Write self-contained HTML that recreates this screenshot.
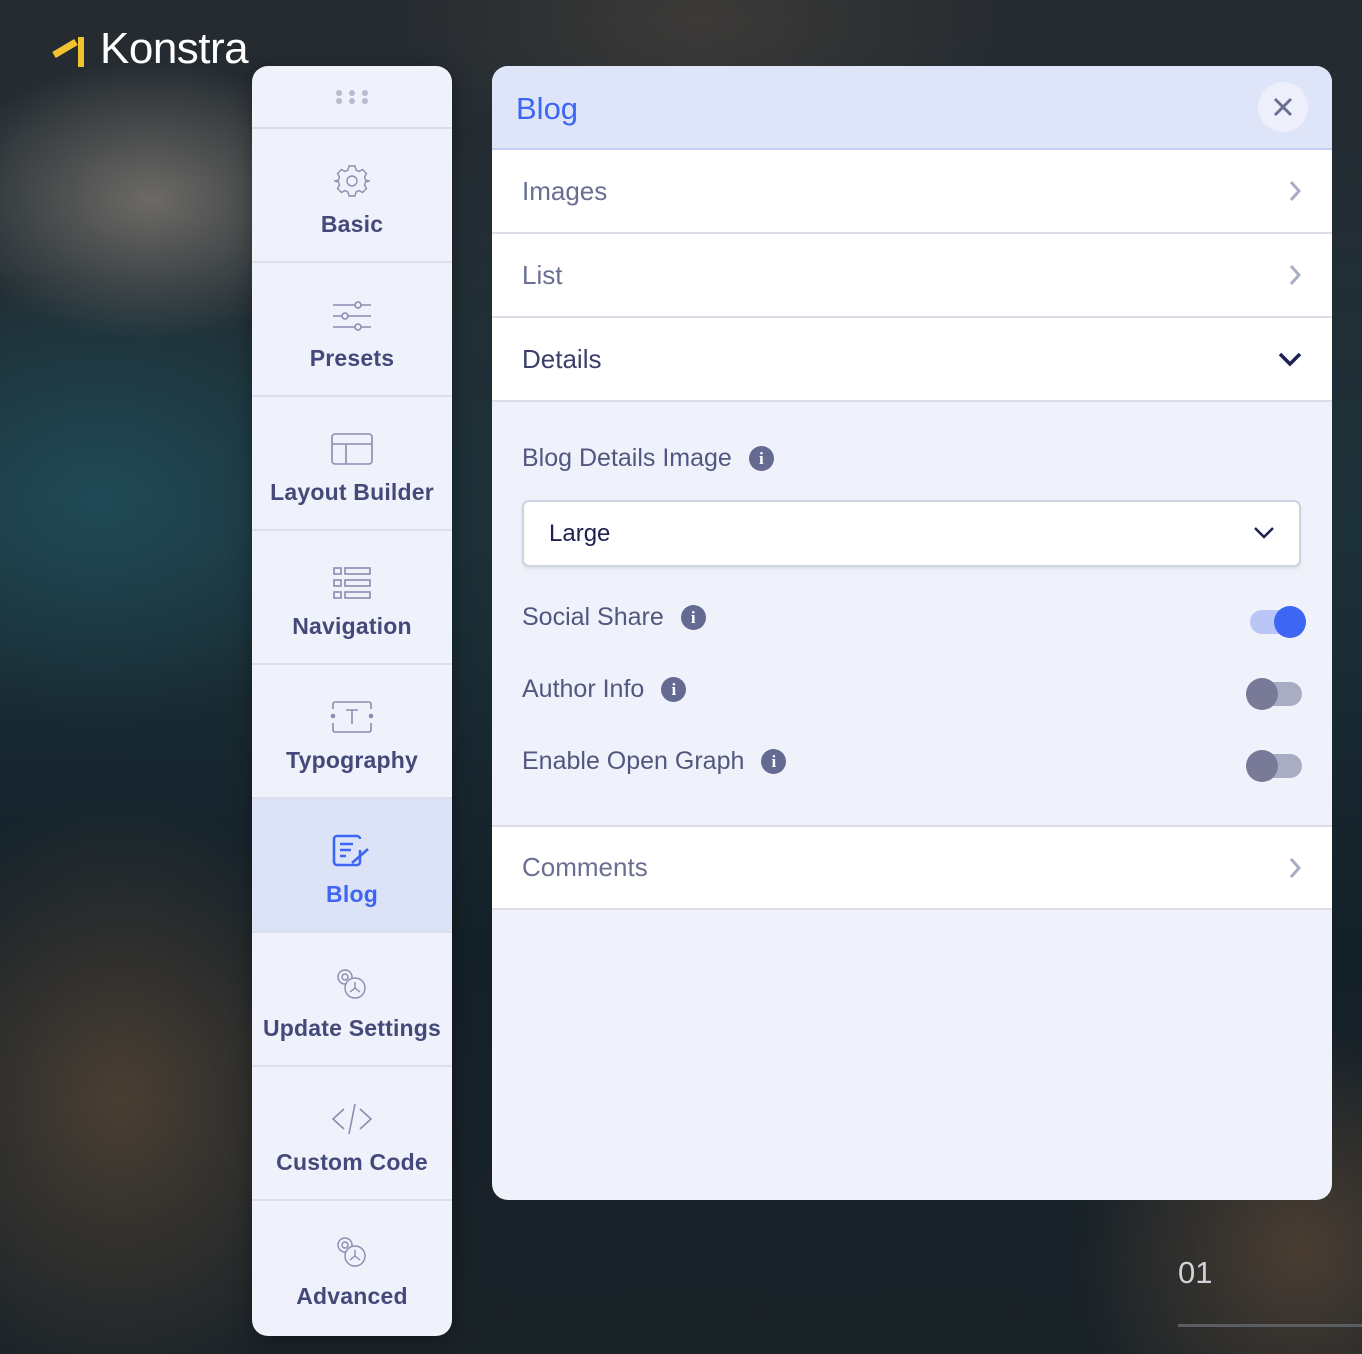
<!DOCTYPE html>
<html><head><meta charset="utf-8"><style>
*{box-sizing:border-box;margin:0;padding:0}
body{width:1362px;height:1354px;overflow:hidden;position:relative;font-family:"Liberation Sans",sans-serif;
background:
radial-gradient(ellipse 300px 200px at 150px 200px,#6d6a66 0%,transparent 70%),
radial-gradient(ellipse 400px 300px at 100px 500px,#1f4a56 0%,transparent 75%),
radial-gradient(ellipse 350px 400px at 120px 1100px,#4a3e33 0%,transparent 75%),
radial-gradient(ellipse 300px 300px at 1300px 1250px,#4a3d32 0%,transparent 75%),
radial-gradient(ellipse 400px 200px at 700px 20px,#3c3a38 0%,transparent 75%),
linear-gradient(180deg,#262b30 0%,#1c3038 40%,#142028 70%,#1a2328 100%);}
.logo{position:absolute;left:52px;top:24px;color:#fff;font-size:44px;letter-spacing:-0.5px;display:flex;align-items:center}
.side{position:absolute;left:252px;top:66px;width:200px;height:1270px;background:#eff2fa;border-radius:16px;overflow:hidden;box-shadow:0 4px 20px rgba(0,0,0,.3)}
.dots{height:63px;border-bottom:2px solid #d8dbe8;display:flex;justify-content:center;align-items:center}
.it{height:134px;border-bottom:2px solid #dcdfea;display:flex;flex-direction:column;align-items:center;justify-content:flex-start;padding-top:34px;color:#45497a;font-size:23px;font-weight:bold;letter-spacing:.2px}
.it svg{height:36px;margin-bottom:12px}
.it.act{background:#dde3f6;color:#3d66f5}
.panel{position:absolute;left:492px;top:66px;width:840px;height:1134px;background:#eff2fa;border-radius:16px;overflow:hidden}
.hd{height:84px;background:#dfe5f8;border-bottom:2px solid #c5d0f2;display:flex;align-items:center;padding:4px 24px 0;color:#3d66f5;font-size:31px;position:relative}
.x{position:absolute;right:24px;top:16px;width:50px;height:50px;border-radius:50%;background:#edf0fa;display:flex;align-items:center;justify-content:center}
.row{height:84px;background:#fff;border-bottom:2px solid #dcdde6;display:flex;align-items:center;padding:0 30px;font-size:26px;color:#6a6f92;justify-content:space-between}
.lab{position:absolute;left:30px;font-size:25px;color:#52577f;display:flex;align-items:center}
.i{display:inline-block;width:25px;height:25px;border-radius:50%;background:#646a92;color:#fff;font-size:17px;font-weight:bold;text-align:center;line-height:25px;margin-left:17px;font-family:"Liberation Serif",serif}
.tg{position:absolute;width:56px;height:24px;border-radius:12px}
.kn{position:absolute;width:32px;height:32px;border-radius:50%;top:-4px}
</style></head><body>
<div class="logo"><svg width="38" height="36" viewBox="0 0 38 36"><path d="M2 24 L24 11" stroke="#f2c230" stroke-width="7"/><rect x="26" y="6" width="6" height="30" fill="#f2c230"/></svg><span style="margin-left:10px">Konstra</span></div>

<div class="side">
<div class="dots"><svg width="34" height="14"><g fill="#b7bbd0"><circle cx="4" cy="3" r="3"/><circle cx="17" cy="3" r="3"/><circle cx="30" cy="3" r="3"/><circle cx="4" cy="11" r="3"/><circle cx="17" cy="11" r="3"/><circle cx="30" cy="11" r="3"/></g></svg></div>
<div class="it"><svg width="36" viewBox="0 0 36 36" fill="none" stroke="#8a8db0" stroke-width="1.4"><circle cx="18" cy="18" r="5"/><path d="M15 3h6l1 4 3 1.5 3.5-2 4 4-2 3.5L31.5 17l3.5 1v0l-3.5 1-1 3 2 3.5-4 4-3.5-2-3 1.5-1 4h-6l-1-4-3-1.5-3.5 2-4-4 2-3.5L4.5 19 1 18l3.5-1 1-3-2-3.5 4-4 3.5 2L14 7z"/></svg>Basic</div>
<div class="it"><svg width="40" viewBox="0 0 40 36" fill="none" stroke="#8a8db0" stroke-width="1.6"><path d="M1 8h38M1 19h38M1 30h38"/><circle cx="26" cy="8" r="3" fill="#eff2fa"/><circle cx="13" cy="19" r="3" fill="#eff2fa"/><circle cx="26" cy="30" r="3" fill="#eff2fa"/></svg>Presets</div>
<div class="it"><svg width="42" viewBox="0 0 42 36" fill="none" stroke="#8a8db0" stroke-width="1.6"><rect x="1" y="3" width="40" height="30" rx="3"/><path d="M1 13h40M15 13v20"/></svg>Layout Builder</div>
<div class="it"><svg width="38" viewBox="0 0 38 36" fill="none" stroke="#8a8db0" stroke-width="1.6"><rect x="1" y="3" width="7" height="6"/><rect x="12" y="3" width="25" height="6"/><rect x="1" y="15" width="7" height="6"/><rect x="12" y="15" width="25" height="6"/><rect x="1" y="27" width="7" height="6"/><rect x="12" y="27" width="25" height="6"/></svg>Navigation</div>
<div class="it"><svg width="44" viewBox="0 0 44 36" fill="none" stroke="#8a8db0" stroke-width="1.6"><path d="M3 10V5a2 2 0 012-2h34a2 2 0 012 2v5M3 24v7a2 2 0 002 2h34a2 2 0 002-2v-7"/><path d="M16 11h12M22 11v14"/><circle cx="3" cy="17" r="1.5" fill="#8a8db0"/><circle cx="41" cy="17" r="1.5" fill="#8a8db0"/></svg>Typography</div>
<div class="it act"><svg width="40" viewBox="0 0 40 36" fill="none" stroke="#3d66f5" stroke-width="2.6"><path d="M28 17v12a3 3 0 01-3 3H5a3 3 0 01-3-3V6a3 3 0 013-3h20a3 3 0 013 3"/><path d="M8 11h13M8 17h11M8 23h6"/><path d="M20 30l16-14" /></svg>Blog</div>
<div class="it"><svg width="36" viewBox="0 0 36 36" fill="none" stroke="#8a8db0" stroke-width="1.4"><circle cx="11" cy="10" r="7"/><circle cx="11" cy="10" r="3"/><circle cx="21" cy="21" r="10" fill="#eff2fa"/><path d="M21 21l0-6M21 21l5 4M21 21l-5 4"/></svg>Update Settings</div>
<div class="it"><svg width="42" viewBox="0 0 42 36" fill="none" stroke="#8a8db0" stroke-width="1.6"><path d="M13 8L2 18l11 10M29 8l11 10-11 10M24 3L18 33"/></svg>Custom Code</div>
<div class="it" style="border:none"><svg width="36" viewBox="0 0 36 36" fill="none" stroke="#8a8db0" stroke-width="1.4"><circle cx="11" cy="10" r="7"/><circle cx="11" cy="10" r="3"/><circle cx="21" cy="21" r="10" fill="#eff2fa"/><path d="M21 21l0-6M21 21l5 4M21 21l-5 4"/></svg>Advanced</div>
</div>

<div class="panel">
<div class="hd">Blog<div class="x"><svg width="20" height="20"><path d="M2 2L18 18M18 2L2 18" stroke="#6a6f92" stroke-width="3"/></svg></div></div>
<div class="row">Images<svg width="14" height="22"><path d="M3 2l8 9-8 9" stroke="#a9adc4" stroke-width="3" fill="none"/></svg></div>
<div class="row">List<svg width="14" height="22"><path d="M3 2l8 9-8 9" stroke="#a9adc4" stroke-width="3" fill="none"/></svg></div>
<div class="row" style="color:#3b3f6a">Details<svg width="24" height="16"><path d="M2 3l10 10 10-10" stroke="#1c2150" stroke-width="3.5" fill="none"/></svg></div>
<div style="height:423px;position:relative">
<div class="lab" style="top:42px">Blog Details Image<span class="i">i</span></div>
<div style="position:absolute;left:30px;top:98px;width:779px;height:67px;background:#fff;border:2px solid #cfd2e2;border-radius:7px;box-shadow:0 2px 3px rgba(0,0,0,.08);padding-left:25px;line-height:63px;font-size:24px;color:#1c2150">Large<svg style="position:absolute;right:24px;top:24px" width="22" height="14"><path d="M2 2l9 9 9-9" stroke="#1c2150" stroke-width="2.5" fill="none"/></svg></div>
<div class="lab" style="top:201px">Social Share<span class="i">i</span></div>
<div class="tg" style="left:758px;top:208px;background:#bac7f6"><div class="kn" style="left:24px;background:#3d66f5"></div></div>
<div class="lab" style="top:273px">Author Info<span class="i">i</span></div>
<div class="tg" style="left:754px;top:280px;width:56px;background:#a9adc4"><div class="kn" style="left:0;background:#787a98"></div></div>
<div class="lab" style="top:345px">Enable Open Graph<span class="i">i</span></div>
<div class="tg" style="left:754px;top:352px;width:56px;background:#a9adc4"><div class="kn" style="left:0;background:#787a98"></div></div>
</div>
<div class="row" style="border-top:2px solid #dcdde6;height:85px">Comments<svg width="14" height="22"><path d="M3 2l8 9-8 9" stroke="#a9adc4" stroke-width="3" fill="none"/></svg></div>
</div>
<div style="position:absolute;left:1178px;top:1255px;color:#cfd2d6;font-size:31px">01</div>
<div style="position:absolute;left:1178px;top:1324px;width:184px;height:3px;background:#5a5e62"></div>
</body></html>
